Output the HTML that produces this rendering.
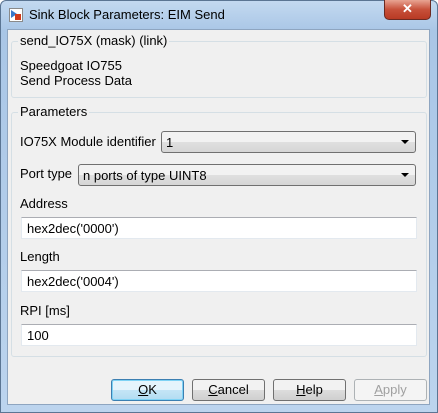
<!DOCTYPE html><html><head><style>
*{margin:0;padding:0;box-sizing:border-box}
body{width:438px;height:413px;overflow:hidden;background:#fff;font-family:"Liberation Sans",sans-serif;font-size:13px;color:#000;position:relative}
.win{position:absolute;left:0;top:0;width:438px;height:413px;background:linear-gradient(#c3d9f0,#a9c6e6 30px,#bcd4ee);border:1px solid #5b7593;border-radius:6px 6px 0 0}
.client{position:absolute;left:7px;top:29px;width:423px;height:376px;background:#f0f0f0;border:1px solid #8ea5c0}
.a{position:absolute;white-space:nowrap}
.grp{position:absolute;border:1px solid #d5dfe5;border-radius:3px}
.leg{position:absolute;background:#f0f0f0;padding:0 2px}
.in{position:absolute;background:#fff;border:1px solid #e3e9ef;border-top-color:#abadb3;height:22px;padding:3px 5px}
.cb{position:absolute;border:1px solid #707070;border-radius:3px;height:22px;background:linear-gradient(#f2f2f2 50%,#e0e0e0 50%,#d6d6d6);padding:3px 4px}
.cb:after{content:"";position:absolute;right:6px;top:8px;border-left:4px solid transparent;border-right:4px solid transparent;border-top:4px solid #000}
.btn{position:absolute;top:379px;width:73px;height:22px;border:1px solid #707070;border-radius:3px;background:linear-gradient(#f2f2f2 50%,#dddddd 50%,#cfcfcf);text-align:center;line-height:20px}
</style></head><body>
<div class="win"></div>
<div style="position:absolute;left:9px;top:8px;width:14px;height:14px;border:1px solid #8a8a8a;background:#fff"><div style="position:absolute;left:1px;top:1px;width:0;height:0;border-top:4px solid transparent;border-bottom:4px solid transparent;border-left:6px solid #3a78c8"></div><div style="position:absolute;right:1px;bottom:1px;width:6px;height:6px;background:#d03a1a"></div></div>
<div class="a" style="left:29px;top:7px;font-size:13px">Sink Block Parameters: EIM Send</div>
<div style="position:absolute;left:384px;top:0;width:47px;height:20px;border:1px solid #6b2a22;border-top:none;border-radius:0 0 5px 5px;background:linear-gradient(#e8a493,#c7503a 50%,#b83a24);color:#fff;font-weight:bold;text-align:center;line-height:18px;font-size:13px">✕</div>
<div class="client"></div>
<div class="grp" style="left:11px;top:41px;width:416px;height:57px"></div>
<div class="leg a" style="left:18px;top:33px">send_IO75X (mask) (link)</div>
<div class="a" style="left:20px;top:58px">Speedgoat IO755</div>
<div class="a" style="left:20px;top:73px">Send Process Data</div>
<div class="grp" style="left:11px;top:112px;width:416px;height:245px"></div>
<div class="leg a" style="left:18px;top:104px">Parameters</div>
<div class="a" style="left:20px;top:134px">IO75X Module identifier</div>
<div class="cb" style="left:161px;top:131px;width:255px">1</div>
<div class="a" style="left:20px;top:166px">Port type</div>
<div class="cb" style="left:78px;top:164px;width:338px">n ports of type UINT8</div>
<div class="a" style="left:20px;top:196px">Address</div>
<div class="in" style="left:21px;top:217px;width:396px">hex2dec('0000')</div>
<div class="a" style="left:20px;top:249px">Length</div>
<div class="in" style="left:21px;top:270px;width:396px">hex2dec('0004')</div>
<div class="a" style="left:20px;top:303px">RPI [ms]</div>
<div class="in" style="left:21px;top:324px;width:396px">100</div>
<div class="btn" style="left:111px;border-color:#3c7fb1;box-shadow:inset 0 0 0 1px #7fd3f5;background:linear-gradient(#e5f4fc 50%,#c4e5f6 50%,#b2dcf2)"><u>O</u>K</div>
<div class="btn" style="left:192px"><u>C</u>ancel</div>
<div class="btn" style="left:273px"><u>H</u>elp</div>
<div class="btn" style="left:354px;border-color:#adb2b5;background:#f4f4f4;color:#a0a0a0"><u>A</u>pply</div>
</body></html>
